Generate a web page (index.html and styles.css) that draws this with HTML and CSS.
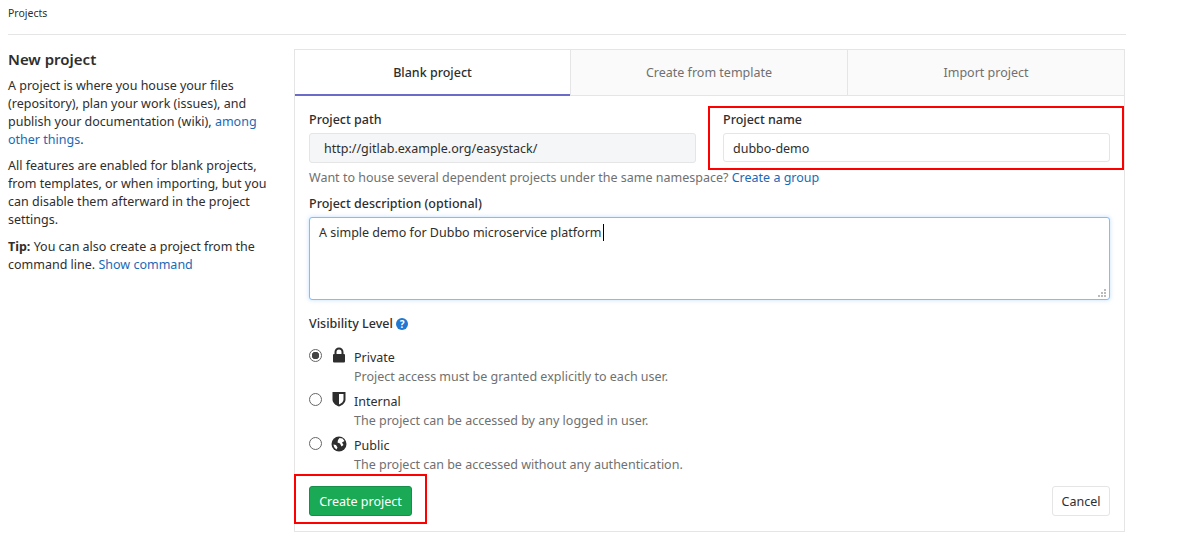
FILE: index.html
```html
<!DOCTYPE html>
<html lang="en">
<head>
  <meta charset="UTF-8" />
  <title>New project</title>
  <link rel="stylesheet" href="styles.css">
</head>
<body>

<!-- Breadcrumb -->
<div class="crumbs">Projects</div>

<div class="page">
  <!-- Left intro column -->
  <aside class="intro">
    <h4>New project</h4>
    <p>A project is where you house your files (repository), plan your work (issues), and publish your documentation (wiki), <a href="#">among other things</a>.</p>
    <p>All features are enabled for blank projects, from templates, or when importing, but you can disable them afterward in the project settings.</p>
    <p><b>Tip:</b> You can also create a project from the command line. <a href="#">Show command</a></p>
  </aside>

  <!-- Form panel -->
  <section class="panel">
    <ul class="tabs">
      <li class="tab active">Blank project</li>
      <li class="tab">Create from template</li>
      <li class="tab">Import project</li>
    </ul>

    <form class="form">
      <div class="row">
        <div class="field">
          <label>Project path</label>
          <div class="input readonly">http://gitlab.example.org/easystack/</div>
        </div>
        <div class="field name-field">
          <label>Project name</label>
          <div class="input">dubbo-demo</div>
          <span class="mark"></span>
        </div>
      </div>
      <p class="hint">Want to house several dependent projects under the same namespace? <a href="#">Create a group</a></p>

      <label class="desc-label">Project description (optional)</label>
      <div class="desc-wrap">
        <textarea class="desc" readonly>A simple demo for Dubbo microservice platform</textarea>
        <span class="caret"></span>
        <svg class="grip" viewBox="0 0 8 8"><path fill="#bbb" d="M6 0h2v2H6zM3 3h2v2H3zM6 3h2v2H6zM0 6h2v2H0zM3 6h2v2H3zM6 6h2v2H6z"/></svg>
      </div>

      <div class="vis-label">Visibility Level <span class="help">?</span></div>

      <div class="vis-option">
        <span class="radio checked"></span>
        <svg class="vis-icon" viewBox="0 0 16 16"><path fill="#2e2e2e" d="M3.500 7V5a4.500 4.500 0 0 1 9 0v2h.5a1 1 0 0 1 1 1v6.500a1 1 0 0 1-1 1H3a1 1 0 0 1-1-1V8a1 1 0 0 1 1-1zm2 0h5V5a2.500 2.500 0 0 0-5 0z"/></svg>
        <div class="vis-text">
          <div class="vis-name">Private</div>
          <div class="vis-desc">Project access must be granted explicitly to each user.</div>
        </div>
      </div>
      <div class="vis-option">
        <span class="radio"></span>
        <svg class="vis-icon" viewBox="0 0 16 16"><path fill="#2e2e2e" fill-rule="evenodd" d="M1.500 1h13v7.500c0 3.300-3 5.800-6.500 7-3.500-1.200-6.500-3.700-6.500-7zM8 3v10.400c2.500-.9 4.500-2.700 4.500-4.900V3z"/></svg>
        <div class="vis-text">
          <div class="vis-name">Internal</div>
          <div class="vis-desc">The project can be accessed by any logged in user.</div>
        </div>
      </div>
      <div class="vis-option">
        <span class="radio"></span>
        <svg class="vis-icon globe" viewBox="0 0 16 16"><circle cx="8" cy="8" r="7.500" fill="#2e2e2e"/><path fill="#fff" d="M8.500 2l3 .5 2 2.500-2.500 1.500L12.500 9l-2 1.500-1.500-3-2.500-1L7 4zM2.500 8.500l2.500.5 1.500 2.500-1 2c-1.500-1-3-3-3-5z"/></svg>
        <div class="vis-text">
          <div class="vis-name">Public</div>
          <div class="vis-desc">The project can be accessed without any authentication.</div>
        </div>
      </div>

      <div class="actions">
        <div class="create-wrap">
          <button type="button" class="btn btn-create">Create project</button>
          <span class="mark"></span>
        </div>
        <button type="button" class="btn btn-cancel">Cancel</button>
      </div>
    </form>
  </section>
</div>

</body>
</html>
```

FILE: styles.css
```css
* {
  margin: 0;
  padding: 0;
  box-sizing: border-box;
}

body {
  background-color: white;
  font-family: "Noto Sans", "Open Sans", sans-serif;
  font-size: 12.5px;
  line-height: 18px;
  color: #2e2e2e;
}

a {
  color: #1b69b6;
  text-decoration: none;
}

.crumbs {
  margin: 0 51px 0 8px;
  height: 35px;
  padding-top: 4px;
  font-size: 10.5px;
  border-bottom: 1px solid #e5e5e5;
}

.page {
  display: flex;
  padding: 14px 52px 0 8px;
}

/* Left column */
.intro {
  width: 262px;
  margin-right: 24px;
  flex: none;
}

.intro h4 {
  font-size: 15px;
  font-weight: 600;
  line-height: 20px;
  margin-bottom: 8px;
}

.intro p {
  margin-bottom: 8.4px;
}

/* Panel with tabs */
.panel {
  flex: 1;
  height: 483px;
  border: 1px solid #e5e5e5;
}

.tabs {
  display: flex;
  list-style: none;
  height: 46px;
}

.tab {
  flex: 1;
  text-align: center;
  line-height: 46px;
  color: #707070;
  background-color: #fafafa;
  border-left: 1px solid #e5e5e5;
  border-bottom: 1px solid #e5e5e5;
}

.tab.active {
  flex: none;
  width: 275px;
  color: #2e2e2e;
  font-weight: 500;
  background-color: white;
  border-left: 0;
  border-bottom: 2px solid #6b6bc8;
}

.form {
  padding: 14px 14px 0;
}

.row {
  display: flex;
  gap: 27px;
}

.field {
  position: relative;
  flex: 1;
}

label,
.vis-label {
  display: block;
  font-weight: 500;
  line-height: 18px;
}

.field label {
  padding-top: 1px;
}

.input {
  height: 30px;
  margin-top: 4px;
  padding: 0 9px;
  line-height: 30px;
  border: 1px solid #e5e5e5;
  border-radius: 3px;
}

.input.readonly {
  padding: 0 14px;
  background-color: #f5f6f7;
}

.name-field .input {
  height: 29px;
}

/* Red annotation boxes */
.mark {
  position: absolute;
  border: 2px solid #f00;
  pointer-events: none;
}

.name-field .mark {
  top: -4px;
  left: -15px;
  right: -14px;
  bottom: -7px;
}

.create-wrap .mark {
  top: -12px;
  left: -15px;
  right: -15px;
  bottom: -8px;
}

.hint {
  margin-top: 6px;
  color: #707070;
}

.desc-label {
  margin-top: 8px;
}

.desc-wrap {
  position: relative;
  margin-top: 4px;
  height: 83px;
}

.desc {
  display: block;
  width: 100%;
  height: 83px;
  padding: 6px 9px;
  font: inherit;
  color: #2e2e2e;
  border: 1px solid #80bdff;
  border-radius: 3px;
  outline: 0;
  box-shadow: 0 0 4px rgba(128, 189, 255, 0.5);
  resize: none;
}

.caret {
  position: absolute;
  top: 7px;
  left: 294px;
  width: 1px;
  height: 17px;
  background-color: black;
}

.grip {
  position: absolute;
  right: 4px;
  bottom: 3px;
  width: 8px;
  height: 8px;
}

.vis-label {
  margin-top: 15px;
  margin-bottom: 15px;
}

.help {
  display: inline-block;
  width: 12px;
  height: 12px;
  border-radius: 50%;
  background-color: #1f78d1;
  color: white;
  font-size: 10px;
  font-weight: 700;
  line-height: 12px;
  text-align: center;
}

.vis-option {
  display: flex;
  height: 44px;
}

.radio {
  width: 13px;
  height: 13px;
  margin-top: 1px;
  margin-right: 9px;
  flex: none;
  border: 1px solid #666;
  border-radius: 50%;
  background-color: white;
}

.radio.checked {
  background: radial-gradient(circle, #444 0 3.5px, white 4px);
}

.vis-icon {
  width: 16px;
  height: 16px;
  margin-top: -1px;
  margin-right: 7px;
  flex: none;
}

.vis-icon.globe {
  margin-top: 0;
}

.vis-name {
  padding-top: 1px;
  line-height: 18px;
}

.vis-desc {
  color: #707070;
  line-height: 18px;
  margin-top: 1px;
}

.actions {
  display: flex;
  justify-content: space-between;
  margin-top: 6px;
}

.create-wrap {
  position: relative;
}

.btn {
  height: 30px;
  padding-top: 2px;
  font: inherit;
  border-radius: 3px;
  border: 1px solid #e5e5e5;
  background-color: white;
  color: #2e2e2e;
}

.btn-create {
  display: block;
  width: 103px;
  color: white;
  background-color: #1aaa55;
  border-color: #168f48;
}

.btn-cancel {
  width: 58px;
}
```
